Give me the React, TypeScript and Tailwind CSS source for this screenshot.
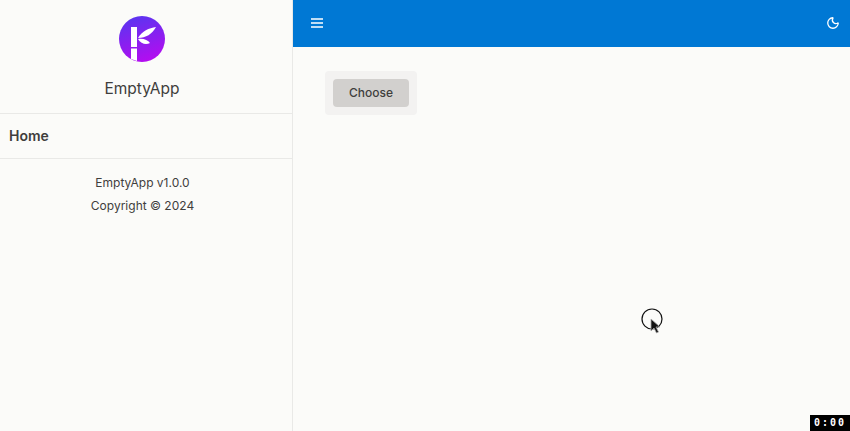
import React from 'react';
import { Moon } from 'lucide-react';

const Logo: React.FC = () => (
  <svg viewBox="0 0 46 46" className="w-[46px] h-[46px]">
    <defs>
      <linearGradient id="logoFill" x1="0.3" y1="0" x2="0.6" y2="1">
        <stop offset="0" stopColor="#5a35f0" />
        <stop offset="1" stopColor="#b50cf0" />
      </linearGradient>
    </defs>
    <circle cx="23" cy="23" r="23" fill="url(#logoFill)" />
    <path d="M12 11h6v20h-6zM12 32.500h6V45l-6-2z" fill="#fff" />
    <path d="M19 22C23 15 30 12 37 11C33 18 27 22 19 22Z" fill="#fff" />
    <path d="M19 23C24 22 29 24 31 27C27 29 22 28 19 23Z" fill="#fff" />
  </svg>
);

const MenuIcon: React.FC = () => (
  <svg viewBox="0 0 12 10" className="w-3 h-[10px]" fill="none" stroke="currentColor" strokeWidth="1.400">
    <path d="M0 1h12M0 5h12M0 9h12" />
  </svg>
);

const App: React.FC = () => {
  return (
    <div className="relative flex h-[431px] w-[850px] overflow-hidden bg-[#fbfbf9] font-['Inter',sans-serif] text-[#3f3e3d]">
      <aside className="w-[293px] shrink-0 border-r border-[#e9e9e7] flex flex-col">
        <div className="flex flex-col items-center pt-4 pr-2 h-[114px] border-b border-[#e9e9e7]">
          <Logo />
          <div className="mt-[15px] text-[15.500px] leading-[24px]">EmptyApp</div>
        </div>
        <div className="h-[45px] border-b border-[#e9e9e7] pl-[9px] flex items-center text-sm font-semibold">
          Home
        </div>
        <div className="pt-3 pr-[7px] text-center text-xs leading-[23px]">
          <div>EmptyApp v1.0.0</div>
          <div>Copyright © 2024</div>
        </div>
      </aside>
      <div className="flex-1 flex flex-col">
        <header className="h-[47px] bg-[#0078d4] flex items-center justify-between pl-[18px] pr-[10px] pb-px text-white">
          <MenuIcon />
          <Moon size={14} strokeWidth={2.250} />
        </header>
        <main className="pt-6 pl-8">
          <div className="w-[92px] h-11 p-2 rounded bg-[#f3f2f1]">
            <button className="w-[76px] h-7 rounded bg-[#d2d0ce] text-xs font-medium text-[#3f3e3d]">
              Choose
            </button>
          </div>
        </main>
      </div>

      {/* recorded mouse pointer */}
      <svg viewBox="0 0 24 28" className="absolute left-[641px] top-[308px] w-6 h-7">
        <circle cx="11" cy="11" r="10" fill="#fbfbf9" stroke="#111" strokeWidth="1.200" />
        <path d="M10 11v12l3-3 2.500 5 2-1-2.500-5h4z" fill="#111" stroke="#aaa" strokeWidth="0.800" />
      </svg>

      {/* recording timer */}
      <div className="absolute right-0 bottom-0 w-10 h-4 bg-black text-white text-[10px] leading-[16px] text-center tracking-[2px] font-['DejaVu_Sans_Mono',monospace] font-bold">
        0:00
      </div>
    </div>
  );
};

export default App;
